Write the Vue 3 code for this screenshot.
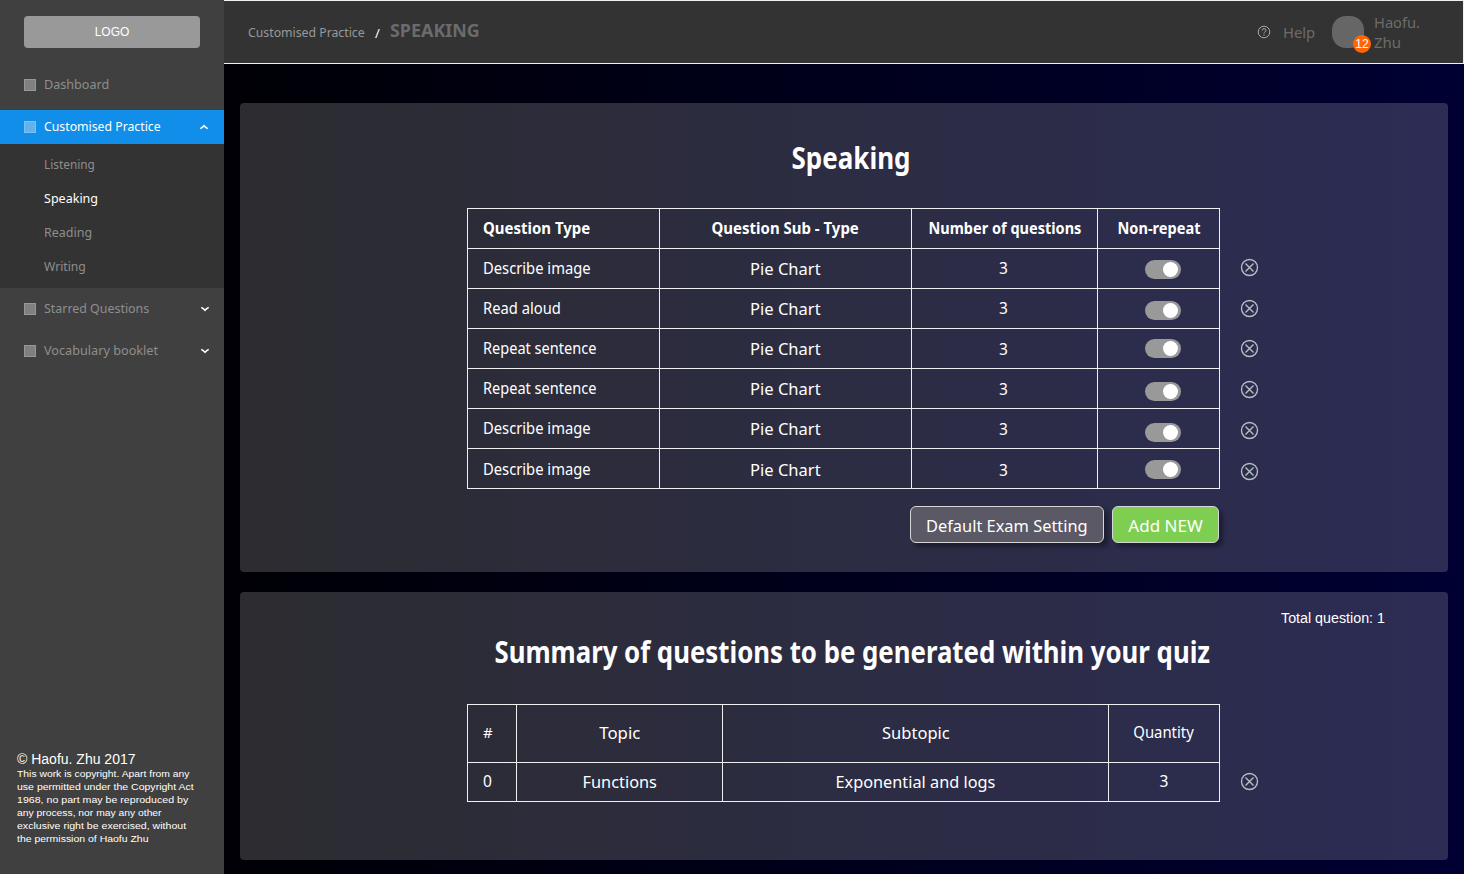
<script setup>
import { h } from 'vue'

// Scales a text run horizontally so its advance equals the given width.
const vFit = {
  mounted(el, { value }) {
    if (value) el.style.transform = `scaleX(${value / el.offsetWidth})`
  }
}

const subItems = [
  { label: 'Listening', w: 51 },
  { label: 'Speaking', w: 54, active: true },
  { label: 'Reading', w: 48 },
  { label: 'Writing', w: 42 }
]
const bottomItems = [
  { label: 'Starred Questions', w: 105 },
  { label: 'Vocabulary booklet', w: 114 }
]
const legal = [
  ['This work is copyright. Apart from any', 173],
  ['use permitted under the Copyright Act', 177],
  ['1968, no part may be reproduced by', 171],
  ['any process, nor may any other', 145],
  ['exclusive right be exercised, without', 169],
  ['the permission of Haofu Zhu', 131]
]
const heads = [
  ['Question Type', 107],
  ['Question Sub - Type', 147],
  ['Number of questions', 153],
  ['Non-repeat', 83]
]
// Vertical nudges per cell: type, sub-type, count, toggle, remove
const rows = [
  { type: 'Describe image', w: 107.5, dy: [0, 1, 0, 1.5, 0] },
  { type: 'Read aloud', w: 78, dy: [0, 1, 0, 2.5, 1] },
  { type: 'Repeat sentence', w: 113.5, dy: [0, 1, 1, 0.5, 1] },
  { type: 'Repeat sentence', w: 113.5, dy: [0, 1, 1, 3.5, 2] },
  { type: 'Describe image', w: 107.5, dy: [0, 1, 1, 4.5, 3] },
  { type: 'Describe image', w: 107.5, dy: [1, 2, 2, 1.5, 3.5] }
]
const shift = (n) => ({ paddingTop: n * 2 + 'px' })

const RemoveIcon = () =>
  h('svg', { width: 19, height: 19, viewBox: '0 0 19 19', fill: 'none', stroke: '#b4c1c1', 'stroke-width': 1.35 }, [
    h('circle', { cx: 9.5, cy: 9.5, r: 8 }),
    h('path', { d: 'M5.5 5.5l8 8M13.5 5.5l-8 8' })
  ])
</script>

<template>
  <div class="app">
    <aside class="sidebar">
      <div class="logo">LOGO</div>
      <div class="item"><i class="box"></i><span v-fit="65" class="t">Dashboard</span></div>
      <div class="item active">
        <i class="box"></i><span v-fit="117" class="t">Customised Practice</span>
        <svg class="chev up" width="10" height="6" viewBox="0 0 10 6"><path d="M1.3 4.6Q3.3 3.6 5 1.7Q6.7 3.6 8.7 4.6" /></svg>
      </div>
      <div class="submenu">
        <div v-for="s in subItems" :key="s.label" class="sub" :class="{ on: s.active }">
          <span v-fit="s.w" class="t">{{ s.label }}</span>
        </div>
      </div>
      <div v-for="b in bottomItems" :key="b.label" class="item lower">
        <i class="box"></i><span v-fit="b.w" class="t">{{ b.label }}</span>
        <svg class="chev" width="10" height="6" viewBox="0 0 10 6"><path d="M1.3 1.4Q3.3 2.4 5 4.3Q6.7 2.4 8.7 1.4" /></svg>
      </div>
      <footer class="copy">
        <div class="owner"><span v-fit="119" class="t">© Haofu. Zhu 2017</span></div>
        <div v-for="l in legal" :key="l[0]" class="legal"><span v-fit="l[1]" class="t">{{ l[0] }}</span></div>
      </footer>
    </aside>

    <div class="main">
      <header class="top">
        <div class="crumb"><span v-fit="117" class="t">Customised Practice</span></div>
        <div class="slash">/</div>
        <div class="here"><span v-fit="89.5" class="t">SPEAKING</span></div>
        <svg class="q" width="14" height="14" viewBox="0 0 14 14" fill="none" stroke="#a8a8a8">
          <circle cx="7" cy="7" r="5.8" />
          <path d="M5 5.5Q5 3.7 7 3.7T9 5.5Q9 6.4 7.9 6.9Q7 7.3 7 8.4M7 9.4V10.6" />
        </svg>
        <div class="help"><span v-fit="32.5" class="t">Help</span></div>
        <div class="avatar"><b class="badge">12</b></div>
        <div class="user">
          <div><span v-fit="46" class="t">Haofu.</span></div>
          <div><span v-fit="27" class="t">Zhu</span></div>
        </div>
      </header>

      <section class="card first">
        <h1><span v-fit="119" class="t mid">Speaking</span></h1>
        <div class="grid g1">
          <div v-for="(x, i) in heads" :key="x[0]" class="cell th" :class="{ left: i === 0 }">
            <span v-fit="x[1]" class="t" :class="{ mid: i > 0 }">{{ x[0] }}</span>
          </div>
          <div class="out"></div>
          <template v-for="(r, i) in rows" :key="i">
            <div class="cell left sm type" :style="shift(r.dy[0])"><span v-fit="r.w" class="t">{{ r.type }}</span></div>
            <div class="cell" :style="shift(r.dy[1])"><span v-fit="71" class="t mid">Pie Chart</span></div>
            <div class="cell sm count" :style="shift(r.dy[2])">3</div>
            <div class="cell tog" :style="shift(r.dy[3])"><i class="toggle"></i></div>
            <div class="out" :style="shift(r.dy[4])"><RemoveIcon /></div>
          </template>
        </div>
        <div class="actions">
          <button class="btn grey"><span v-fit="162" class="t mid">Default Exam Setting</span></button>
          <button class="btn green"><span v-fit="74" class="t mid">Add NEW</span></button>
        </div>
      </section>

      <section class="card second">
        <div class="total"><span v-fit="104" class="t">Total question: 1</span></div>
        <h1><span v-fit="716" class="t mid">Summary of questions to be generated within your quiz</span></h1>
        <div class="grid g2">
          <div class="cell left sm raise hash">#</div>
          <div class="cell"><span v-fit="41.5" class="t mid">Topic</span></div>
          <div class="cell"><span v-fit="68" class="t mid">Subtopic</span></div>
          <div class="cell sm raise"><span v-fit="60.5" class="t mid">Quantity</span></div>
          <div class="out"></div>
          <div class="cell left sm raise">0</div>
          <div class="cell drop"><span v-fit="74" class="t mid">Functions</span></div>
          <div class="cell drop"><span v-fit="160" class="t mid">Exponential and logs</span></div>
          <div class="cell sm raise">3</div>
          <div class="out"><RemoveIcon /></div>
        </div>
      </section>
    </div>
  </div>
</template>

<style>
body { margin: 0; overflow: hidden; background: #000; }
</style>

<style scoped>
.app { display: flex; width: 1464px; height: 874px; font-family: "Noto Sans", "Open Sans", sans-serif; color: #fff; overflow: hidden; }
.t { display: inline-block; white-space: nowrap; transform-origin: left center; }
.mid { transform-origin: center; }

.sidebar { width: 224px; flex: none; background: #404040; display: flex; flex-direction: column; font-size: 13px; color: #8e8e8e; }
.logo { margin: 16px 24px 20px; height: 32px; flex: none; background: #999; border-radius: 4px; text-align: center; color: #fff; font: 12px/32px "Liberation Sans", Arial, sans-serif; }
.item { height: 34px; flex: none; padding: 0 14px 0 24px; display: flex; align-items: center; gap: 8px; margin-bottom: 8px; }
.item .t { padding-bottom: 2px; }
.item.active { background: #108ee9; color: #fff; margin-bottom: 0; }
.item.lower { margin: 4px 0; }
.item .box { width: 10px; height: 10px; flex: none; background: #808080; border: 1px solid #979797; }
.item.active .box { background: #62b2f0; border-color: #7cc0f4; }
.chev { margin-left: auto; fill: none; stroke: #fff; stroke-width: 1.6; }
.chev.up { margin-right: 1px; }
.submenu { background: #333; padding: 3px 0 5px; flex: none; }
.sub { height: 34px; line-height: 34px; padding-left: 44px; }
.sub.on { color: #fff; }
.copy { margin: auto 0 29px 17px; color: #fff; font-family: "Liberation Sans", Arial, sans-serif; }
.owner { font-size: 14px; height: 16px; line-height: 16px; }
.legal { font-size: 9.75px; height: 13px; line-height: 13px; }

.main { flex: none; width: 1240px; background: linear-gradient(90deg, #000006, #000033); }
.top { height: 62px; background: #333; border: solid #f0f0f0; border-width: 1px 1px 1px 0; display: flex; align-items: flex-start; }
.crumb { width: 127px; padding: 21px 0 0 24px; font-size: 13px; line-height: 20px; color: #999; }
.slash { width: 15px; padding-top: 22px; font-size: 13px; line-height: 20px; }
.here { padding-top: 16px; font-size: 18px; line-height: 26px; font-weight: 700; color: #6b6b6b; width: 100px; }
.q { margin: 24px 12px 0 auto; }
.help, .user { font-size: 15px; line-height: 20px; color: #6c6c6c; }
.help { padding-top: 21px; width: 49px; }
.avatar { width: 32px; height: 32px; margin-top: 15px; border-radius: 14px; background: #666; position: relative; }
.badge { position: absolute; left: 21px; top: 19px; width: 18px; height: 18px; border-radius: 50%; background: #f60; color: #fff; text-align: center; font: 12px/18px "Liberation Sans", Arial, sans-serif; }
.user { margin: 11px 0 0 10px; width: 89px; }

.card { margin: 0 16px; border-radius: 4px; background: rgba(255, 255, 255, .173); overflow: hidden; }
.first { margin-top: 39px; height: 469px; }
.second { margin-top: 20px; height: 268px; }
h1 { margin: 0 0 0 14px; width: 1195px; display: flex; justify-content: center; font-size: 31px; line-height: 40px; font-weight: 700; white-space: nowrap; }
.first h1 { margin-top: 34px; width: 1194px; }
.second h1 { margin-top: 2px; width: 1196px; }

.grid { display: grid; margin-left: 227px; width: max-content; }
.g1 { grid-template-columns: 192px 252px 186px 123px 58px; grid-template-rows: repeat(6, 40px) 41px; margin-top: 31px; }
.g2 { grid-template: 58px 40px / 49px 206px 386px 112px 58px; margin-top: 33px; }
.cell { box-sizing: border-box; border-left: 1px solid #f0f0f2; border-top: 1px solid #f0f0f2; display: flex; align-items: center; justify-content: center; font-size: 17px; line-height: 22px; padding-bottom: 1px; min-width: 0; }
.cell:has(+ .out) { border-right: 1px solid #f0f0f2; }
.g1 .cell:nth-last-child(-n + 5), .g2 .cell:nth-last-child(-n + 5) { border-bottom: 1px solid #f0f0f2; }
.cell.left { justify-content: flex-start; padding-left: 15px; }
.cell.sm { font-size: 15.5px; }
.cell.type { padding-bottom: 2px; }
.cell.count { padding: 0 2px 2px 0; }
.cell.hash { font-size: 15px; }
.cell.th { font-weight: 700; font-size: 16.5px; }
.tog { padding-left: 8px; }
.cell.raise { padding-bottom: 3px; }
.drop { padding-top: 1px; }
.out { box-sizing: border-box; display: flex; align-items: center; justify-content: center; padding-bottom: 1px; }
.toggle { width: 36px; height: 19px; border-radius: 10px; background: #999; display: flex; align-items: center; justify-content: flex-end; flex: none; }
.toggle::after { content: ""; width: 15px; height: 15px; margin-right: 3px; border-radius: 50%; background: #fff; }

.actions { display: flex; gap: 8px; margin: 17px 0 0 670px; }
.btn { box-sizing: border-box; height: 37px; padding: 2px 0 0; border: 1px solid #d7d7d7; border-radius: 6px; color: #fff; font: 17px/22px "Noto Sans", "Open Sans", sans-serif; box-shadow: 4px 4px 4px rgba(0, 0, 0, .35); display: flex; align-items: center; justify-content: center; white-space: nowrap; }
.grey { width: 194px; background: #5a5965; }
.green { width: 107px; background: #7ecf51; }
.total { margin: 17px 0 0 1041px; font: 14px/18px "Liberation Sans", Arial, sans-serif; height: 20px; }
</style>
